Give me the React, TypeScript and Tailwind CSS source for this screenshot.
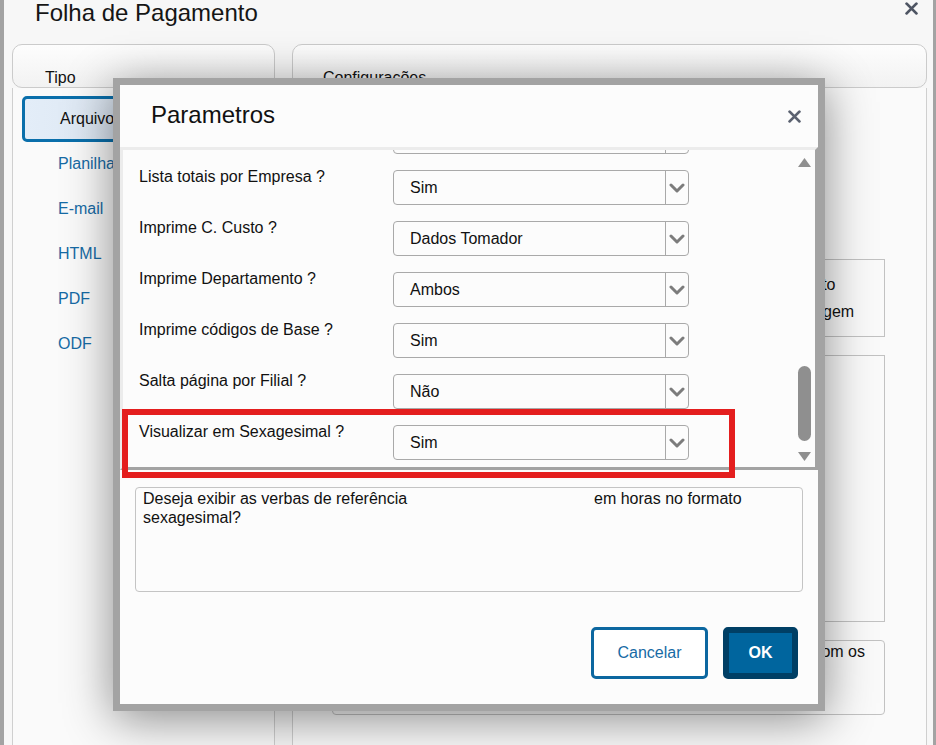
import React from "react";

const FONT = "font-['Liberation_Sans',Arial,sans-serif]";

function Chevron() {
  return (
    <svg width="16" height="10" viewBox="0 0 16 10" className="block">
      <path d="M2 2 L8 8 L14 2" fill="none" stroke="#7c7c7c" strokeWidth="3" strokeLinecap="round" strokeLinejoin="round" />
    </svg>
  );
}

function CloseIcon({ color, size }: { color: string; size: number }) {
  return (
    <svg width={size} height={size} viewBox="0 0 12 12" className="block">
      <path d="M1.5 1.5 L10.5 10.5 M10.5 1.5 L1.5 10.5" stroke={color} strokeWidth="2.6" strokeLinecap="round" />
    </svg>
  );
}

function Select({ value }: { value: string }) {
  return (
    <div className="mt-2 flex h-[35px] w-[296px] items-stretch rounded-[4px] border border-[#a9a9a9] bg-[#fcfcfc]">
      <div className="flex flex-1 items-center pl-4 text-[16px] text-[#111]">{value}</div>
      <div className="flex w-[23px] items-center justify-center border-l border-[#a9a9a9]">
        <Chevron />
      </div>
    </div>
  );
}

const rows = [
  { label: "Imprime Totais ?", value: "Sim" },
  { label: "Lista totais por Empresa ?", value: "Sim" },
  { label: "Imprime C. Custo ?", value: "Dados Tomador" },
  { label: "Imprime Departamento ?", value: "Ambos" },
  { label: "Imprime códigos de Base ?", value: "Sim" },
  { label: "Salta página por Filial ?", value: "Não" },
  { label: "Visualizar em Sexagesimal ?", value: "Sim" },
];

const tipos = ["Planilha", "E-mail", "HTML", "PDF", "ODF"];

export default function App() {
  return (
    <div className={`${FONT} relative h-[745px] w-[936px] overflow-hidden border-l-4 border-r-[3px] border-[#a3a3a3] bg-[#f7f7f7] text-[#111]`}>
      {/* window title bar */}
      <div className="flex h-[44px] items-start justify-between">
        <div className="pl-[31px] pt-[0px] text-[24px] leading-[26px] text-[#151515]">Folha de Pagamento</div>
        <div className="pr-[15px] pt-[2px]">
          <CloseIcon color="#4e5563" size={13} />
        </div>
      </div>

      {/* panels */}
      <div className="flex h-[701px]">
        {/* left: Tipo */}
        <div className="ml-[8px] flex w-[263px] flex-col">
          <div className="flex h-[44px] items-start rounded-[10px] border border-[#cbcbcb] bg-gradient-to-b from-[#fdfdfd] to-[#f2f2f2] pl-[32px] pt-[24px]">
            <span className="text-[16px] leading-[18px]">Tipo</span>
          </div>
          <div className="flex flex-1 flex-col border-x border-[#cfcfcf] bg-[#fafafa] pt-[8px]">
            <div className="ml-[9px] flex h-[46px] w-[240px] items-center rounded-[5px] border-[3px] border-[#0a6fab] bg-gradient-to-r from-[#e3edf8] to-[#d5dfeb] pl-[35px] text-[16px]">
              Arquivo
            </div>
            <div className="mt-[13px] flex flex-col gap-[27px] pl-[45px]">
              {tipos.map((t) => (
                <div key={t} className="text-[16px] leading-[18px] text-[#176ba5]">
                  {t}
                </div>
              ))}
            </div>
          </div>
        </div>

        {/* right: Configurações */}
        <div className="ml-[17px] mr-[6px] flex w-[635px] flex-col">
          <div className="flex h-[44px] items-start rounded-[10px] border border-[#cbcbcb] bg-gradient-to-b from-[#fdfdfd] to-[#f2f2f2] pl-[30px] pt-[24px]">
            <span className="text-[16px] leading-[18px]">Configurações</span>
          </div>
          <div className="flex flex-1 flex-col border-x border-[#cfcfcf] bg-[#fafafa] pl-[39px] pr-[41px] pt-[171px]">
            <div className="flex h-[78px] flex-col gap-[9px] border border-[#c2c2c2] pl-[450px] pt-[16px] text-[16px] leading-[18px]">
              <span>Retrato</span>
              <span>Paisagem</span>
            </div>
            <div className="mt-[18px] h-[267px] border border-[#c2c2c2]" />
            <div className="mt-[18px] h-[75px] rounded-[4px] border border-[#c2c2c2] pr-[19px] pt-[2px] text-right text-[16px] leading-[18px]">
              Enviar relatório com os
            </div>
          </div>
        </div>
      </div>

      {/* Parametros dialog */}
      <div className="absolute left-[109px] top-[78px] flex h-[633px] w-[712px] flex-col border-[7px] border-[#a3a3a3] bg-[#fcfcfc] shadow-[0_8px_45px_rgba(0,0,0,0.45)]">
        <div className="flex h-[62px] shrink-0 items-center justify-between pl-[31px] pr-[17px]">
          <span className="pb-[2px] text-[24px] leading-[28px] text-[#111]">Parametros</span>
          <CloseIcon color="#5b6270" size={13} />
        </div>

        <div className="flex h-[323px] shrink-0 border-b-[3px] border-l-[3px] border-r-[3px] border-t-[3px] border-b-[#a3a3a3] border-l-[#ececec] border-r-[#a3a3a3] border-t-[#ececec]">
          <div className="flex-1 overflow-hidden">
            <div className="-mt-[39px] flex flex-col">
              {rows.map((r) => (
                <div key={r.label} className="flex h-[51px] items-start">
                  <div className="mt-[6px] w-[270px] pl-[16px] text-[16px] leading-[18px]">{r.label}</div>
                  <Select value={r.value} />
                </div>
              ))}
            </div>
          </div>
          <div className="flex w-[22px] flex-col items-center pt-[7px]">
            <svg width="15" height="11" viewBox="0 0 15 11" className="block">
              <path d="M7.5 1 L14 10 L1 10 Z" fill="#8f8f8f" />
            </svg>
            <div className="mt-[198px] h-[75px] w-[13px] rounded-full bg-[#8f8f8f]" />
            <svg width="15" height="11" viewBox="0 0 15 11" className="mt-[10px] block">
              <path d="M1 1 L14 1 L7.5 10 Z" fill="#8f8f8f" />
            </svg>
          </div>
        </div>

        <div className="mx-[15px] mt-[17px] h-[105px] shrink-0 rounded-[4px] border border-[#c4c4c4] px-[7px] pt-[1px] text-[16px] leading-[19px]">
          <span className="inline-block w-[451px]">Deseja exibir as verbas de referência</span>
          <span>em horas no formato</span>
          <br />
          sexagesimal?
        </div>

        <div className="mr-[20px] mt-[35px] flex justify-end gap-[15px]">
          <button className="flex h-[52px] w-[117px] items-center justify-center rounded-[5px] border-[3px] border-[#0c67a0] bg-white text-[16px] text-[#176ba5]">
            Cancelar
          </button>
          <button className="flex h-[52px] w-[75px] items-center justify-center rounded-[5px] border-[6px] border-[#003f65] bg-[#00659e] text-[16px] font-bold text-white">
            OK
          </button>
        </div>
      </div>

      {/* highlight around the Sexagesimal row */}
      <div className="pointer-events-none absolute left-[118px] top-[409px] h-[69px] w-[613px] border-[6px] border-[#e41e1e]" />
    </div>
  );
}
